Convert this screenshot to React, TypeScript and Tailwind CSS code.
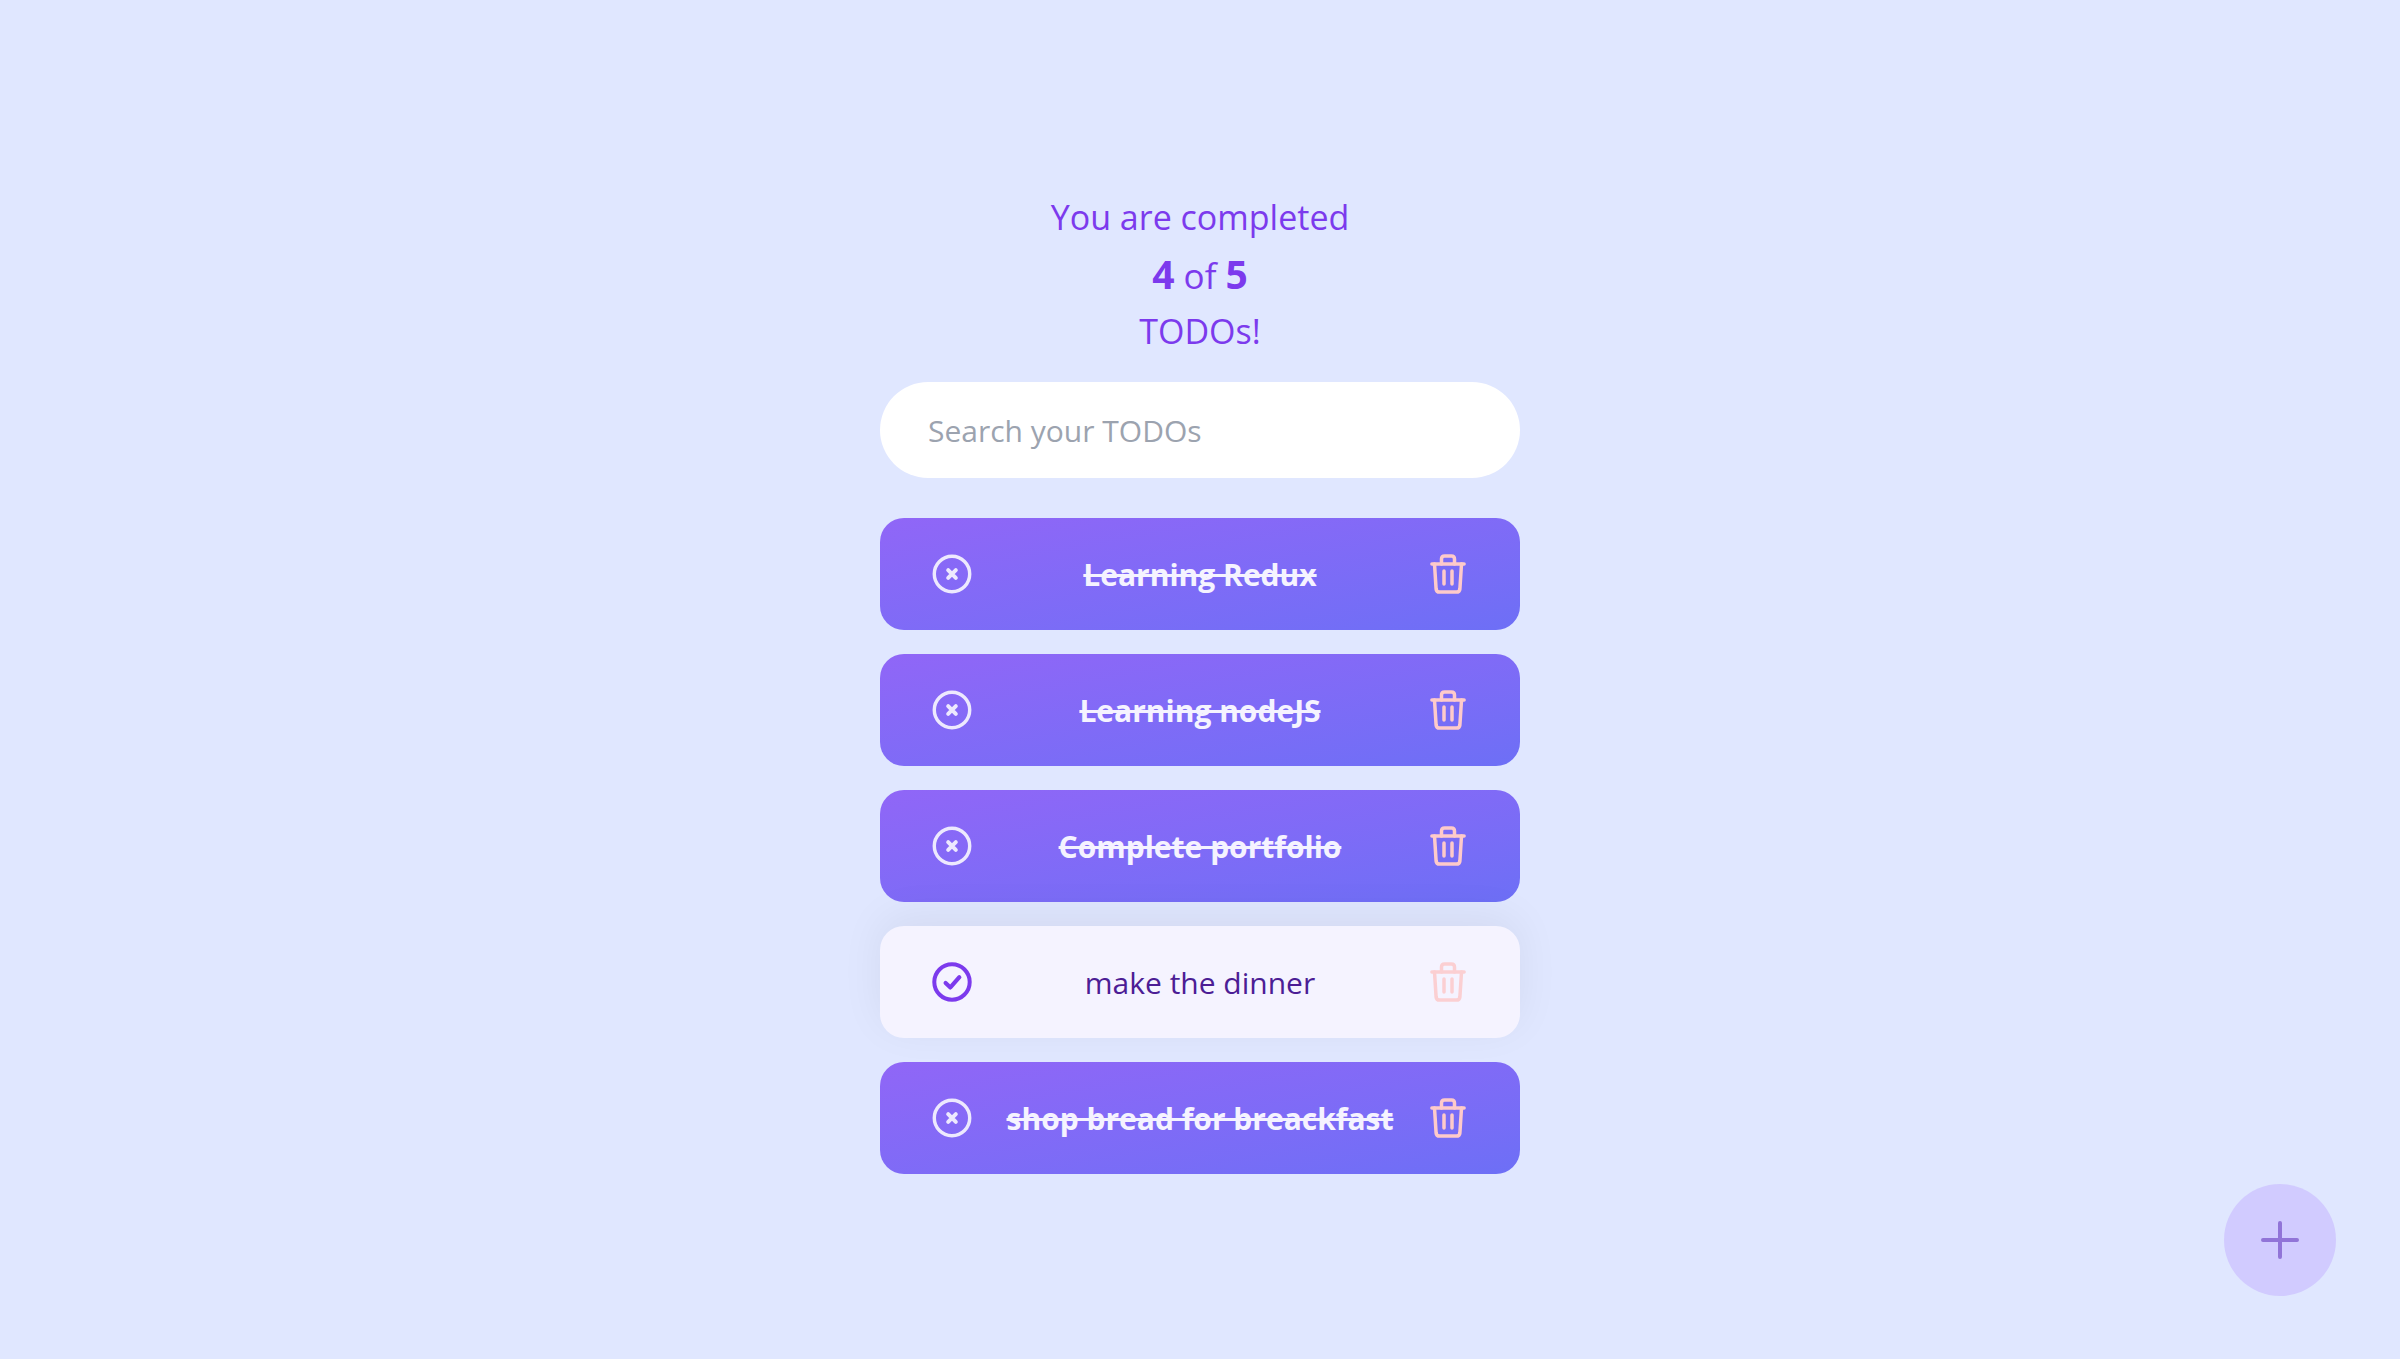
import React from 'react';

const font = { fontFamily: '"Open Sans", "Noto Sans", sans-serif' };

type Todo = { text: string; completed: boolean };

const todos: Todo[] = [
  { text: 'Learning Redux', completed: true },
  { text: 'Learning nodeJS', completed: true },
  { text: 'Complete portfolio', completed: true },
  { text: 'make the dinner', completed: false },
  { text: 'shop bread for breackfast', completed: true },
];

const StatusIcon: React.FC<{ completed: boolean }> = ({ completed }) => (
  <svg width="42" height="42" viewBox="0 0 42 42" fill="none" strokeLinecap="round" strokeLinejoin="round"
    className={completed ? 'text-[#ede9fe]' : 'text-[#7c3aed]'} stroke="currentColor">
    <circle cx="21" cy="21" r="18.6" strokeWidth={completed ? 3.6 : 4.2} />
    {completed ? (
      <path d="M17 17l8 8M25 17l-8 8" strokeWidth="4.2" />
    ) : (
      <path d="M14.3 22l5 4.7 9.4-10.7" strokeWidth="4.4" />
    )}
  </svg>
);

const TrashIcon: React.FC<{ muted: boolean }> = ({ muted }) => (
  <svg width="36" height="40" viewBox="0 0 36 40" fill="none" stroke="currentColor" strokeWidth="3.5"
    strokeLinecap="round" strokeLinejoin="round" className={muted ? 'text-[#fbcfd2]' : 'text-[#fecaca]'}>
    <path d="M1.9 10h32.2" />
    <path d="M4.5 10l1.6 25q.3 3.1 3.6 3.1h16.6q3.3 0 3.6-3.1l1.6-25" />
    <path d="M11.5 10V5q0-3.1 3.1-3.1h6.8q3.1 0 3.1 3.1v5" />
    <path d="M14 17v13M22 17v13" />
  </svg>
);

const TodoItem: React.FC<{ todo: Todo }> = ({ todo }) => (
  <li
    className={
      todo.completed
        ? 'flex h-[112px] items-center justify-between rounded-[24px] bg-gradient-to-br from-[#9066f7] to-[#6d6ff6] px-[52px]'
        : 'flex h-[112px] items-center justify-between rounded-[24px] bg-[#f5f3ff] px-[52px] shadow-[0_-10px_44px_rgba(0,0,0,0.06)]'
    }
  >
    <span className="flex w-10 justify-center"><StatusIcon completed={todo.completed} /></span>
    <p
      className={
        todo.completed
          ? 'text-[30px] font-bold text-[#f5f3ff] line-through'
          : 'text-[30px] text-[#4c1d95]'
      }
    >
      {todo.text}
    </p>
    <span className="flex w-10 justify-center"><TrashIcon muted={!todo.completed} /></span>
  </li>
);

export default function App() {
  return (
    <div className="relative h-[1359px] overflow-hidden bg-[#e0e7ff]" style={font}>
      <div className="mx-auto flex w-[640px] flex-col pt-[189px]">
        <h1 className="text-center text-[34px] leading-[57px] font-normal text-[#7c3aed]">
          <div>You are completed</div>
          <div className="h-[57px] pt-px text-[35px]"><b className="text-[39px] leading-none">4</b> of <b className="text-[39px] leading-none">5</b></div>
          <div>TODOs!</div>
        </h1>
        <input
          placeholder="Search your TODOs"
          className="mt-[22px] h-[96px] w-full rounded-full bg-white px-12 text-[30px] outline-none placeholder:text-[#9ca3af]"
        />
        <ul className="mt-10 flex flex-col gap-6">
          {todos.map((todo) => (
            <TodoItem key={todo.text} todo={todo} />
          ))}
        </ul>
      </div>
      <button className="absolute right-[64px] bottom-[63px] flex h-28 w-28 items-center justify-center rounded-full bg-[#d1cbff]">
        <svg width="38" height="38" viewBox="0 0 38 38" fill="none" stroke="#9174d8" strokeWidth="4" strokeLinecap="round">
          <path d="M19 2v34M2 19h34" />
        </svg>
      </button>
    </div>
  );
}
